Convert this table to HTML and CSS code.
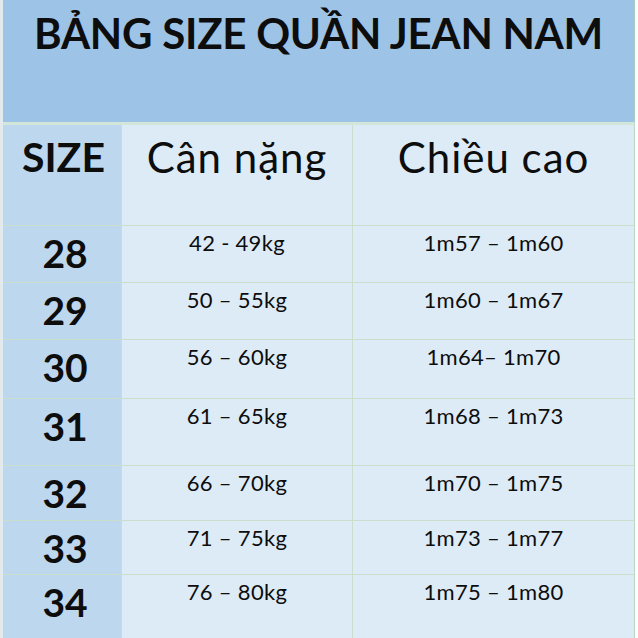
FILE: index.html
```html
<!DOCTYPE html>
<html lang="vi">
<head>
<meta charset="utf-8">
<title>Bảng size quần jean nam</title>
<link rel="stylesheet" href="styles.css">
</head>
<body>
<div class="sheet">
  <header class="banner">
    <h1 class="title">BẢNG SIZE QUẦN JEAN NAM</h1>
  </header>
  <div class="table">
    <div class="cell size head">SIZE</div>
    <div class="cell head-col">Cân nặng</div>
    <div class="cell head-col last">Chiều cao</div>

    <div class="cell size">28</div>
    <div class="cell val">42 - 49kg</div>
    <div class="cell val last">1m57 – 1m60</div>

    <div class="cell size">29</div>
    <div class="cell val">50 – 55kg</div>
    <div class="cell val last">1m60 – 1m67</div>

    <div class="cell size">30</div>
    <div class="cell val">56 – 60kg</div>
    <div class="cell val last">1m64– 1m70</div>

    <div class="cell size">31</div>
    <div class="cell val">61 – 65kg</div>
    <div class="cell val last">1m68 – 1m73</div>

    <div class="cell size">32</div>
    <div class="cell val">66 – 70kg</div>
    <div class="cell val last">1m70 – 1m75</div>

    <div class="cell size">33</div>
    <div class="cell val">71 – 75kg</div>
    <div class="cell val last">1m73 – 1m77</div>

    <div class="cell size end">34</div>
    <div class="cell val end">76 – 80kg</div>
    <div class="cell val last end">1m75 – 1m80</div>
  </div>
</div>
</body>
</html>
```

FILE: styles.css
```css
html, body {
  margin: 0;
  padding: 0;
  background: #ffffff;
}
body {
  width: 638px;
  height: 638px;
  overflow: hidden;
  font-family: "Lato", "Liberation Sans", sans-serif;
  color: #0d0d0d;
  background: linear-gradient(to right, #e3eaee 0, #e3eaee 3px, #ffffff 3px);
}
.sheet {
  margin-left: 3px;
  width: 632px;
  height: 638px;
  display: flex;
  flex-direction: column;
}
.banner {
  height: 122px;
  background: #9dc3e6;
  border-bottom: 3px solid #d3e6da;
  border-right: 1px solid #a9d0c4;
  box-sizing: content-box;
}
.title {
  margin: 0;
  padding-top: 12px;
  text-align: center;
  font-size: 42px;
  font-weight: 700;
  line-height: 1;
  letter-spacing: -0.25px;
}
.table {
  flex: 1;
  display: grid;
  grid-template-columns: 119px 231px 282px;
  grid-template-rows: 101px 57px 57px 59px 67px 55px 54px 1fr;
}
.cell {
  background: #ddebf7;
  border-bottom: 1px solid #c9dfcc;
  border-right: 1px solid #c9dfcc;
  text-align: center;
  line-height: 1;
}
.cell.last {
  border-right: 1px solid #b9d6c0;
}
.cell.end {
  border-bottom: none;
}
.size {
  background: #bdd7ee;
  font-weight: 700;
  font-size: 39px;
  padding-top: 8px;
  padding-left: 6px;
}
.size.head {
  font-size: 41px;
  padding-top: 11px;
  padding-left: 3px;
}
.head-col {
  font-size: 42px;
  font-weight: 400;
  padding-top: 11px;
  letter-spacing: 1px;
}
.val {
  font-size: 22px;
  padding-top: 6px;
  letter-spacing: 0.3px;
}
```
